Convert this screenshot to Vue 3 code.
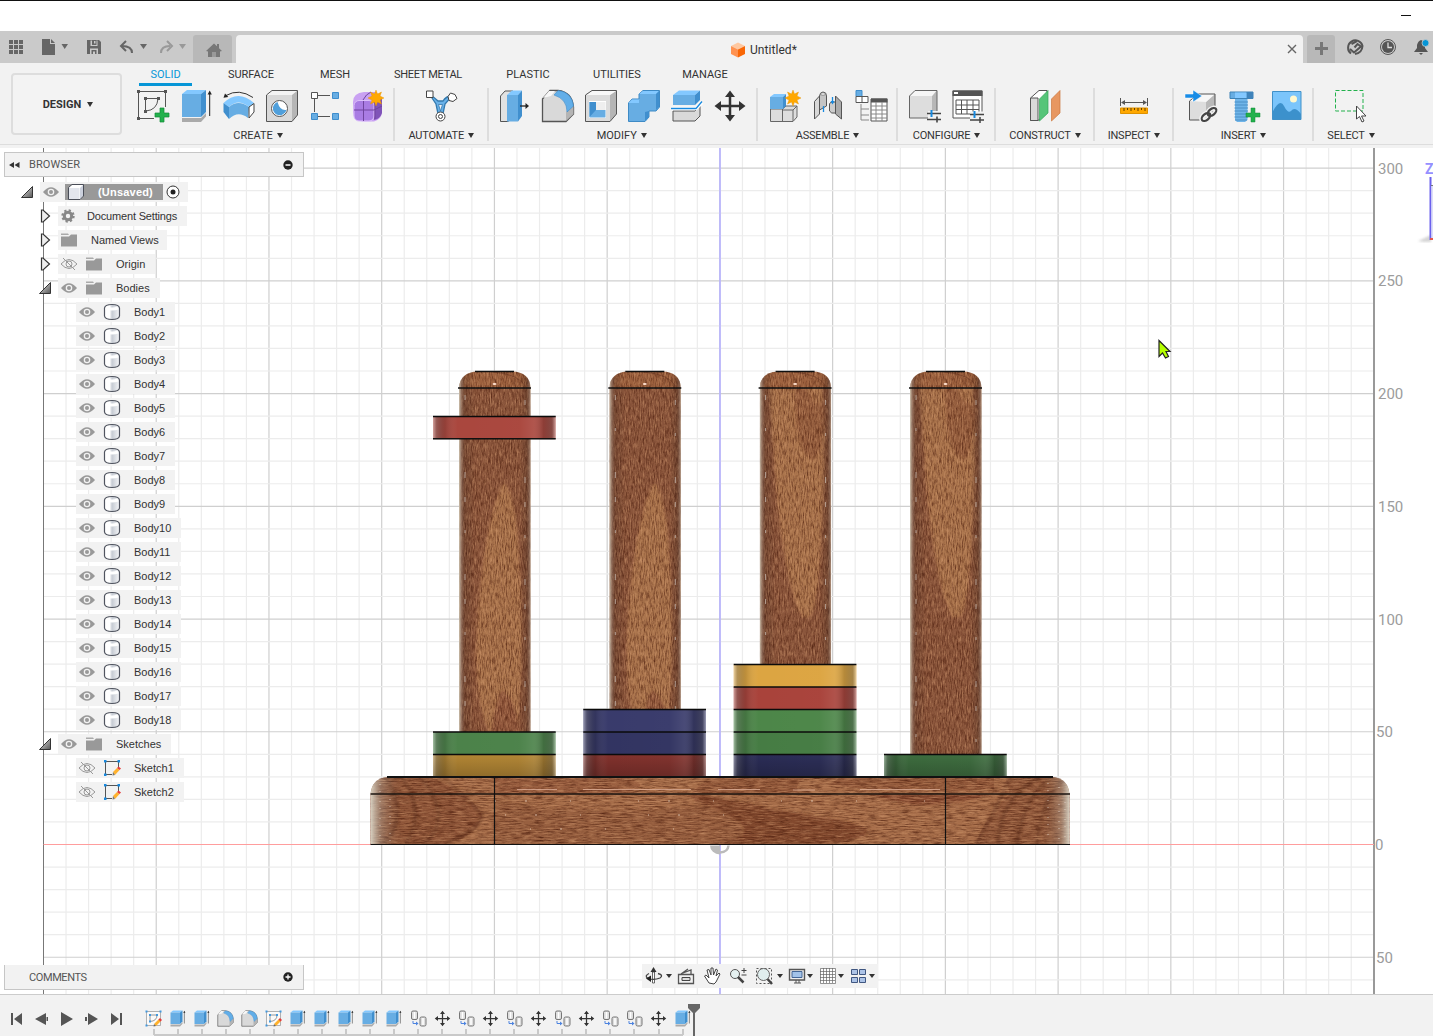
<script setup>
const tabs = ['SOLID', 'SURFACE', 'MESH', 'SHEET METAL', 'PLASTIC', 'UTILITIES', 'MANAGE']

const groups = [
  { name: 'CREATE', cls: 'g-create', icons: ['sketch', 'extrude', 'revolve', 'hole', 'pattern', 'form'] },
  { name: 'AUTOMATE', cls: 'g-automate', icons: ['automate'] },
  { name: 'MODIFY', cls: 'g-modify', icons: ['presspull', 'fillet', 'shell', 'combine', 'split', 'move'] },
  { name: 'ASSEMBLE', cls: 'g-assemble', icons: ['component', 'joint', 'table'] },
  { name: 'CONFIGURE', cls: 'g-configure', icons: ['config', 'configtable'] },
  { name: 'CONSTRUCT', cls: 'g-construct', icons: ['plane'] },
  { name: 'INSPECT', cls: 'g-inspect', icons: ['measure'] },
  { name: 'INSERT', cls: 'g-insert', icons: ['derive', 'bolt', 'image'] },
  { name: 'SELECT', cls: 'g-select', icons: ['select'] },
]

const tree = [
  { label: '(Unsaved)', kind: 'root', open: true, eye: 'eye' },
  { label: 'Document Settings', kind: 'settings', open: false, icon: 'gear' },
  { label: 'Named Views', kind: 'views', open: false, icon: 'folder' },
  { label: 'Origin', kind: 'folder-row', open: false, eye: 'eyeoff', icon: 'folder' },
  { label: 'Bodies', kind: 'folder-row', open: true, eye: 'eye', icon: 'folder' },
  ...Array.from({ length: 18 }, (_, i) => ({ label: `Body${i + 1}`, kind: 'leaf', eye: 'eye', icon: 'body' })),
  { label: 'Sketches', kind: 'folder-row', open: true, eye: 'eye', icon: 'folder' },
  { label: 'Sketch1', kind: 'leaf', eye: 'eyeoff', icon: 'sketchitem' },
  { label: 'Sketch2', kind: 'leaf', eye: 'eyeoff', icon: 'sketchitem' },
]

const history = [
  'tsketch', 'extrude', 'extrude', 'fillet', 'fillet', 'tsketch',
  'extrude', 'extrude', 'extrude', 'extrude', 'extrude',
  'copy', 'move', 'copy', 'move', 'copy', 'move', 'copy', 'move', 'copy', 'copy', 'move', 'extrude',
]

const STEP = 22.547
const columns = Array.from({ length: 60 }, (_, i) => i - 30)
  .map(n => ({ n, x: 719.9 + n * STEP, major: n % 5 === 0 }))
  .filter(c => c.x > 50 && c.x < 1370)
const rows = Array.from({ length: 38 }, (_, i) => i - 6)
  .map(n => ({ n, y: 844.5 - n * STEP, major: n % 5 === 0 }))
  .filter(r => r.y > 148 && r.y < 994)
const scale = [300, 250, 200, 150, 100, 50, 0].map(v => ({ v, y: 844.5 - (v / 10) * STEP }))
scale.push({ v: 50, y: 957.2 })

const pegs = [
  { x: 459, bottom: 732, lobe: 'up' },
  { x: 609.3, bottom: 710, lobe: 'up' },
  { x: 759.6, bottom: 665, lobe: 'down' },
  { x: 910, bottom: 755, lobe: 'down' },
]
const rings = [
  { x: 433, y: 416.5, c: '#a9453c' },
  { x: 433, y: 732, c: '#4a8148' }, { x: 433, y: 754.5, c: '#b28532' },
  { x: 583.3, y: 709.5, c: '#37396a' }, { x: 583.3, y: 732, c: '#303260' }, { x: 583.3, y: 754.5, c: '#81302b' },
  { x: 733.7, y: 664.5, c: '#dca440' }, { x: 733.7, y: 687, c: '#a84139' }, { x: 733.7, y: 709.5, c: '#4b8547' },
  { x: 733.7, y: 732, c: '#447b42' }, { x: 733.7, y: 754.5, c: '#292b55' },
  { x: 884, y: 754.5, c: '#3c6c3d' },
]
</script>

<template>
  <div class="app">
    <svg class="defs" width="0" height="0" aria-hidden="true">
      <defs>
        <linearGradient id="side" x1="0" x2="1"><stop offset="0" stop-color="#d8d8d8" /><stop offset="1" stop-color="#a5a5a5" /></linearGradient>
        <linearGradient id="cyl" x1="0" x2="1"><stop offset="0" stop-color="#fff" /><stop offset=".35" stop-color="#fff" /><stop offset=".5" stop-color="#c6cbd3" /><stop offset="1" stop-color="#f6f7f9" /></linearGradient>
        <linearGradient id="tri" x1="0" y1="0" x2="1" y2="1"><stop offset="0" stop-color="#eee" /><stop offset="1" stop-color="#555" /></linearGradient>
      </defs>

      <symbol id="i-sketch" viewBox="0 0 34 34">
        <path d="M2.500 2.500H29.500V18M2.500 2.500V29.500H18" fill="none" stroke="#555" /><path d="M9.500 22V9.500H22M22 10Q21 21 10 22" fill="none" stroke="#555" />
        <path d="M1 1h3v3H1zM28 1h3v3h-3zM1 28h3v3H1zM8 8h3v3H8zM21 8h3v3h-3zM8 21h3v3H8z" fill="#555" />
        <path d="M24 19h4v5h5v4h-5v5h-4v-5h-5v-4h5z" fill="#22b14c" stroke="#138a36" stroke-width=".7" />
      </symbol>
      <symbol id="i-extrude" viewBox="0 0 34 34">
        <path d="M3 29H22L27 24V27.500L22 33H3z" fill="#aaa" />
        <path d="M3 5L8 1H27L22 5z" fill="#83c8ff" /><path d="M3 5H22V28H3z" fill="#67ade3" /><path d="M22 5L27 1V23L22 28z" fill="#408fce" />
        <path d="M30.700 4V27" stroke="#222" /><path d="M28.600 5.500L30.700 1.500L32.800 5.500z" fill="#222" />
      </symbol>
      <symbol id="i-revolve" viewBox="0 0 34 34">
        <path d="M31 8.500Q17-1 4 6.500" fill="none" stroke="#333" /><path d="M1.500 8.800L3 4.500L6.300 8z" fill="#222" />
        <path d="M1.500 14Q16 0 32 14L27 18Q16 9 7 18z" fill="#83c8ff" />
        <path d="M1.500 14L7 18V30L1.500 23z" fill="#408fce" /><path d="M7 18Q16 10 27 18L26 29Q16 21 7 30z" fill="#67ade3" />
        <path d="M27 18L32 14.500V23L27 29z" fill="#fff" stroke="#444" />
      </symbol>
      <symbol id="i-hole" viewBox="0 0 34 34">
        <path d="M1.500 6L7 1.500H32.500L27 6z" fill="#f4f4f4" /><path d="M27 6L32.500 1.500V26L27 32.500z" fill="#b6b6b6" /><path d="M1.500 6H27V32.500H1.500z" fill="#d9d9d9" />
        <path d="M1.500 6L7 1.500H32.500V26L27 32.500H1.500z" fill="none" stroke="#555" />
        <circle cx="14.500" cy="19.500" r="8" fill="#fff" stroke="#555" /><path d="M12.500 13A6.800 6.800 0 1 0 21.300 21Q15 22 12.500 13z" fill="#4f9fdb" />
      </symbol>
      <symbol id="i-pattern" viewBox="0 0 34 34">
        <path d="M10 6.500H22M6.500 10V23M10 27.500H22" stroke="#555" /><path d="M3.500 3.500h6v6h-6z" fill="#fff" stroke="#555" />
        <path d="M24.500 3.500h6v6h-6zM3.500 24.500h6v6h-6zM24.500 24.500h6v6h-6z" fill="#67ade3" stroke="#3e8dcc" />
      </symbol>
      <symbol id="i-star" viewBox="0 0 16 16">
        <path d="M8 0L9.500 4L13.500 2L12 6L16 8L12 10L13.500 14L9.500 12L8 16L6.500 12L2.500 14L4 10L0 8L4 6L2.500 2L6.500 4z" fill="#ffa800" stroke="#e59200" stroke-width=".4" />
      </symbol>
      <symbol id="i-form" viewBox="0 0 34 34">
        <path d="M2 13Q2 4 13 3H24Q32 6 31 16V23Q31 30 23 32.500H12Q2 32 2 23z" fill="#c9a1f2" />
        <path d="M21 12L31 8V24Q29 30 23 31z" fill="#8054b8" /><rect x="3" y="11.500" width="20" height="20.500" rx="5" fill="#a97ce3" stroke="#dcc0fb" />
        <path d="M12.500 12V32M3 21H23M23 21L31 17M12 11Q15 5 20 3M24 12V30" fill="none" stroke="#70459f" /><use href="#i-star" x="17" y="1" width="16" height="16" />
      </symbol>
      <symbol id="i-automate" viewBox="0 0 34 34">
        <path d="M6 6Q10 8 14 12H19Q22 7 28 7L21 15L18.500 27H14.500L12 15z" fill="#69b1e8" stroke="#3379ae" stroke-width="1.300" /><path d="M14.500 15.500H18.500L16.500 22z" fill="#f2f2f2" stroke="#3379ae" stroke-width=".8" />
        <path d="M2.500 2h6.500v6.500H2.500z" fill="#fff" stroke="#444" /><path d="M26.500 4L31 5.500L33 9.500L29 12.500L25 11.500L24 7.500z" fill="#fff" stroke="#444" />
        <circle cx="16.500" cy="27.500" r="4.500" fill="#fff" stroke="#444" /><circle cx="16.500" cy="27.500" r="2" fill="none" stroke="#444" />
      </symbol>
      <symbol id="i-presspull" viewBox="0 0 34 34">
        <path d="M2.500 7L7 2H15V28L10 32.500H2.500z" fill="#e2e2e2" stroke="#555" /><path d="M9 6L14 1.500H24L20 6z" fill="#83c8ff" /><path d="M9 6h11v26.500H9z" fill="#67ade3" /><path d="M20 6L24 1.500V27L20 32.500z" fill="#408fce" />
        <path d="M22 17H29" stroke="#222" stroke-width="1.300" /><path d="M27.500 14L31 17L27.500 20z" fill="#222" />
      </symbol>
      <symbol id="i-fillet" viewBox="0 0 34 34">
        <path d="M1.500 10L9 1.500H17Q31 3 32.500 18V25L25 32.500H1.500z" fill="#d9d9d9" stroke="#555" stroke-width="1.300" /><path d="M25 23L32.500 17V25L25 32z" fill="#b4b4b4" /><path d="M13 6L17 1.500Q31 3 32.500 17L26 23Q26 10 13 6z" fill="#62aee8" stroke="#3b89c9" stroke-width=".6" /><path d="M2 9L8 2H14L10 7z" fill="#f7f7f7" />
      </symbol>
      <symbol id="i-shell" viewBox="0 0 34 34">
        <path d="M1.500 6L8 1.500H32.500V25L26 32.500H1.500z" fill="#dcdcdc" /><path d="M26 6L32.500 1.500V25L26 32.500z" fill="#b5b5b5" /><path d="M2 6L8 2H32L26 6z" fill="#f8f8f8" /><path d="M1.500 6L8 1.500H32.500V25L26 32.500H1.500z" fill="none" stroke="#555" /><path d="M5 12h17v17H5z" fill="#fff" /><path d="M5.500 13L12 13V21H21.500V28.500H5.500z" fill="#67ade3" /><path d="M12 13H21.500V21H12z" fill="#efefef" /><path d="M5.500 13L12 13V21L5.500 28z" fill="#408fce" />
      </symbol>
      <symbol id="i-combine" viewBox="0 0 34 34">
        <path d="M1.500 14L5 10H12V5L16 1.500H32.500V18L29 22H22V28L18 32.500H1.500z" fill="#67ade3" stroke="#3e8ac5" /><path d="M1.500 14L5 10.500H12V14zM12 5L16 2H32L29 5z" fill="#83c8ff" /><path d="M29 5L32 2V18L29 21zM18 23L22 22V28L18 32z" fill="#408fce" />
      </symbol>
      <symbol id="i-split" viewBox="0 0 34 34">
        <path d="M3 6L9 1.500H30L25 6z" fill="#83c8ff" /><path d="M3 6H25V16H3z" fill="#67ade3" /><path d="M25 6L30 1.500V11L25 16z" fill="#408fce" /><path d="M3 22H25L30 17V27L25 32H3z" fill="#d9d9d9" stroke="#555" /><path d="M1 19.500H26L32 13.500" fill="none" stroke="#fff" stroke-width="3.500" /><path d="M1 19.500H26L32 12.500" fill="none" stroke="#1789df" stroke-width="1.300" />
      </symbol>
      <symbol id="i-move" viewBox="0 0 34 34">
        <path d="M17 5V29M5 17H29" stroke="#333" stroke-width="2.500" /><path d="M17 1.500L22 8H12zM17 32.500L22 26H12zM1.500 17L8 12V22zM32.500 17L26 12V22z" fill="#333" />
      </symbol>
      <symbol id="i-component" viewBox="0 0 34 34">
        <path d="M2.500 20H14.500L18 17H29V28L25 32.500H2.500z" fill="#ddd" stroke="#666" /><path d="M14.500 20V32M14.500 21H25V32M25 21L29 17" fill="none" stroke="#666" /><path d="M2 8L6 5H18L15 8z" fill="#83c8ff" /><path d="M2 8H15V20H2z" fill="#67ade3" /><path d="M15 8L18 5V17L15 20z" fill="#408fce" /><use href="#i-star" x="17" y="1" width="16" height="16" />
      </symbol>
      <symbol id="i-joint" viewBox="0 0 34 34">
        <path d="M3.500 12.500L8.500 7V25L3.500 30z" fill="#d8d8d8" stroke="#555" /><path d="M8.500 7Q9 3 12 3Q15.500 3 15.500 7V17L12 19L8.500 21z" fill="#c4c4c4" stroke="#555" /><ellipse cx="12" cy="5" rx="2.500" ry="1.200" fill="#fff" stroke="#666" stroke-width=".7" />
        <path d="M24.500 7L30.500 13V30L24.500 25z" fill="#ababab" stroke="#555" /><path d="M18.500 15Q19 13 21.500 13H24.500V24Q20 25 18.500 22z" fill="#ccc" stroke="#555" /><path d="M12.500 17V23M21.500 8V14" stroke="#1789df" stroke-width="1.300" /><path d="M19.500 12H23.500L21.500 15.500z" fill="#1789df" />
      </symbol>
      <symbol id="i-table" viewBox="0 0 34 34">
        <path d="M2 1.500h6v6H2z" fill="#67ade3" stroke="#3e8dcc" /><path d="M2 7.500h12v6H2zM8 7.500v6" fill="#fff" stroke="#555" /><path d="M7 15V31H15M7 20H15M7 26H15" fill="none" stroke="#888" /><path d="M17 10h16v22H17z" fill="#fff" stroke="#555" /><path d="M17 9.500h16.500v4H17z" fill="#555" /><path d="M17 17h16M17 21h16M17 25h16M17 29h16M22 13v19M28 13v19" stroke="#888" />
      </symbol>
      <symbol id="i-config" viewBox="0 0 34 34">
        <path d="M1.500 7L7 1.500H29V23L24 29H1.500z" fill="#ddd" /><path d="M24 7L29 1.500V23L24 29z" fill="#b7b7b7" /><path d="M2 7L7 2H28L24 7z" fill="#f6f6f6" /><path d="M1.500 7L7 1.500H29V23L24 29H1.500z" fill="none" stroke="#666" /><path d="M20 22H34V34H20z" fill="#f2f2f2" /><path d="M19 24.500H33M19 30.500H33M29 27.500V33.500" stroke="#444" stroke-width="1.600" /><path d="M23.500 21V28" stroke="#1789df" stroke-width="2" />
      </symbol>
      <symbol id="i-configtable" viewBox="0 0 34 34">
        <path d="M2 2H31V29H2z" fill="#fff" stroke="#555" /><path d="M1.500 1.500H31.500V7H1.500z" fill="#555" /><path d="M3 3h4v2H3z" fill="#fff" /><path d="M5 11h23v14H5zM5 16h23M5 20.500h23M10.500 11v14M16 11v14M22 11v14" fill="none" stroke="#555" /><path d="M19 22.500H34V34H19z" fill="#f2f2f2" /><path d="M19 25.500H33M19 31H33M29 28V34" stroke="#444" stroke-width="1.500" /><path d="M23.500 22V29" stroke="#1789df" stroke-width="2" />
      </symbol>
      <symbol id="i-plane" viewBox="0 0 34 34">
        <path d="M2.500 9L11 1.500H19V24L10 31.500H2.500z" fill="#fff" stroke="#555" /><path d="M2.500 9H10V31.500H2.500z" fill="#d9d9d9" stroke="#555" /><path d="M11.500 10L20 1.500V24L11.500 32z" fill="#56c579" stroke="#35a65a" stroke-width=".7" /><path d="M23.500 10L32 1.500V24L23.500 32z" fill="#e79761" stroke="#cb773d" stroke-width=".7" />
      </symbol>
      <symbol id="i-measure" viewBox="0 0 34 34">
        <path d="M3.500 9V17M30.500 9V17M5 13.500H29" stroke="#555" /><path d="M4 13.500L8 11V16zM30 13.500L26 11V16z" fill="#555" /><path d="M3.500 19H30.500V24.500H3.500z" fill="#ffa800" stroke="#df9200" /><path d="M7 19V22M10.500 19V21M14 19V22M17.500 19V21M21 19V22M24.500 19V21M28 19V22" stroke="#654000" />
      </symbol>
      <symbol id="i-derive" viewBox="0 0 34 34">
        <path d="M5.500 12L14 5H31V23L22 31H5.500z" fill="#ddd" /><path d="M22 13L31 5V23L22 31z" fill="#b9b9b9" /><path d="M5.500 12L14 5H31L22 13z" fill="#f7f7f7" /><path d="M5.500 12L14 5H31V23L22 31H5.500z" fill="none" stroke="#555" /><path d="M1 5h8V1L18 7L9 13V9H1z" fill="#188ce6" stroke="#fff" stroke-width=".5" /><g fill="none" stroke="#f2f2f2" stroke-width="5"><ellipse cx="22" cy="28" rx="5" ry="3" transform="rotate(-40 22 28)" /><ellipse cx="28" cy="23" rx="5" ry="3" transform="rotate(-40 28 23)" /></g><g fill="none" stroke="#444" stroke-width="2.200"><ellipse cx="22" cy="28" rx="5" ry="3" transform="rotate(-40 22 28)" /><ellipse cx="28" cy="23" rx="5" ry="3" transform="rotate(-40 28 23)" /></g>
      </symbol>
      <symbol id="i-bolt" viewBox="0 0 34 34">
        <path d="M3 3h23v6.500H3z" fill="#67ade3" stroke="#3e83b7" /><path d="M8 3.500H19V9H8z" fill="#83c8ff" /><path d="M20 3h6v6.500h-6z" fill="#3f83bb" /><path d="M8 10H20.500V31L18 33H10L8 31z" fill="#70b5e9" /><path d="M7.500 13H21M7.500 16H21M7.500 19H21M7.500 22H21M7.500 25H21M7.500 28H21M8 31H20" stroke="#4a8fc6" stroke-width="1" /><path d="M24 19h4v5h5v4h-5v5h-4v-5h-5v-4h5z" fill="#22b14c" stroke="#138a36" stroke-width=".5" />
      </symbol>
      <symbol id="i-image" viewBox="0 0 34 34">
        <path d="M2.500 2.500H31V30.500H2.500z" fill="#7bc5fb" /><path d="M2.500 23Q10 9 14 17Q18 25 21 22Q25 17 31 25V30.500H2.500z" fill="#3c91cc" /><path d="M2.500 2.500H31V30.500H2.500z" fill="none" stroke="#4191c8" /><circle cx="23.500" cy="10" r="3.500" fill="#fff8cf" />
      </symbol>
      <symbol id="i-select" viewBox="0 0 34 34">
        <path d="M2.500 1.500H30V22H2.500z" fill="none" stroke="#22b14c" stroke-dasharray="4 2" /><path d="M23.500 17V30L26.500 27.500L29 33L31 32L28.500 27H33z" fill="#fff" stroke="#444" />
      </symbol>

      <symbol id="i-eye" viewBox="0 0 18 18"><path d="M1 9Q9-.5 17 9Q9 18.500 1 9z" fill="#999" /><circle cx="9" cy="9" r="3.300" fill="#f2f2f2" /><circle cx="9" cy="9" r="2" fill="#999" /></symbol>
      <symbol id="i-eyeoff" viewBox="0 0 18 18"><path d="M1 9Q9 0 17 9Q9 18 1 9zM3 3L15 15" fill="none" stroke="#999" /><circle cx="9" cy="9" r="3" fill="none" stroke="#999" /></symbol>
      <symbol id="i-gear" viewBox="0 0 18 18"><circle cx="9" cy="9" r="3.700" fill="none" stroke="#888" stroke-width="3" /><circle cx="9" cy="9" r="5.600" fill="none" stroke="#888" stroke-width="2.200" stroke-dasharray="2.200 2.198" /></symbol>
      <symbol id="i-folder" viewBox="0 0 18 18"><path d="M1 5.500H9L11 3.500H17V15.500H1z" fill="#999" /><path d="M1 2.500H8L9 4H1z" fill="#aaa" /></symbol>
      <symbol id="i-body" viewBox="0 0 18 18"><path d="M1.500 5Q2 1.500 9 1.500T16.500 5V13Q16 16.500 9 16.500T1.500 13z" fill="url(#cyl)" stroke="#50545f" stroke-width="1.200" /><path d="M3 5Q9 7 15 5" fill="none" stroke="#fff" stroke-width="3" /></symbol>
      <symbol id="i-cube" viewBox="0 0 18 18"><path d="M1.500 4.500L5 1.500H16.500V13L13 16.500H1.500z" fill="#fff" /><path d="M2 5H12.500V16H2z" fill="#e3e6ed" /><path d="M13 5L16 2V13L13 16z" fill="#cbd0dc" /><path d="M1.500 4.500L5 1.500H16.500V13L13 16.500H1.500z" fill="none" stroke="#4a4e58" /></symbol>
      <symbol id="i-sketchitem" viewBox="0 0 18 18"><path d="M2.500 2.500H15.500V8M2.500 2.500V15.500H9" fill="none" stroke="#555" /><path d="M1 1h2.500v2.500H1zM14.500 1H17v2.500h-2.500zM1 14.500h2.500V17H1z" fill="#1789df" /><path d="M10 13L14 9L16.500 11L12 16z" fill="#ffb22e" /><path d="M14 9L15.500 7.500L18 9.500L16.500 11z" fill="#e43b3b" /><path d="M9.500 16.500L10 13L12 16z" fill="#777" /></symbol>
      <symbol id="i-tsketch" viewBox="0 0 34 34"><path d="M3 3H31V31H3z" fill="#fafafa" stroke="#999" stroke-width="1.500" /><path d="M10 10H24Q24 22 10 23z" fill="none" stroke="#777" stroke-width="1.500" /><path d="M1 1h4v4H1zM29 1h4v4h-4zM1 29h4v4H1zM8 8h4v4H8zM22 8h4v4h-4zM8 21h4v4H8z" fill="#4298dd" /><path d="M18 28L28 18L32 22L22 32z" fill="#ffb22e" /><path d="M27 19L30 16L34 20L31 23z" fill="#e43b3b" /><path d="M17 33L18 28L22 32z" fill="#666" /></symbol>
      <symbol id="i-copy" viewBox="0 0 34 34"><rect x="3" y="2" width="12" height="17" rx="3" fill="#ddd" stroke="#777" stroke-width="2" /><rect x="20" y="14" width="12" height="18" rx="3" fill="#ddd" stroke="#777" stroke-width="2" /><path d="M9 4V17M26 16V30" stroke="#fff" stroke-width="3" /><path d="M6 22V27H13" fill="none" stroke="#4c83df" stroke-width="2" /><path d="M12 23L17 27L12 31z" fill="#4c83df" /></symbol>
    </svg>

    <header class="titlebar"><span class="minimize"></span></header>

    <div class="docbar">
      <div class="quick">
        <svg width="236" height="32" viewBox="0 31 236 32">
          <path d="M9 40h4v4H9zM14 40h4v4h-4zM19 40h4v4h-4zM9 45h4v4H9zM14 45h4v4h-4zM19 45h4v4h-4zM9 50h4v4H9zM14 50h4v4h-4zM19 50h4v4h-4z" fill="#666" />
          <path d="M42 39H50V44H55V55H42zM51 39L55 43H51zM61.500 44H68L64.700 49z" fill="#666" />
          <path d="M87 40H99L101 42V54H87z" fill="#666" /><path d="M90.500 40.500H97.500V46H90.500zM90 48.500H98V54H90z" fill="#cacaca" /><path d="M92 40h4.500v5H92zM91.500 50H96.500V54H91.500z" fill="#666" /><path d="M94 41h1.500v2.500H94zM93 51.500H95V54H93z" fill="#cacaca" />
          <path d="M132 53Q132 46 122 46" fill="none" stroke="#666" stroke-width="2" /><path d="M126 41L121 46L126 51" fill="none" stroke="#666" stroke-width="2" /><path d="M140 44h7l-3.500 5z" fill="#666" />
          <path d="M161 53Q161 46 170 46" fill="none" stroke="#999" stroke-width="2" /><path d="M167 41L172 46L167 51" fill="none" stroke="#999" stroke-width="2" /><path d="M179 44h7l-3.500 5z" fill="#999" />
          <path d="M193 63V38Q193 35 196 35H229Q232 35 232 38V63z" fill="#b8b8b8" /><path d="M206 51L214 43.500L222 51L220 51.500V57H208V51.500z" fill="#777" /><path d="M217 44h2v4h-2z" fill="#777" /><path d="M212 52h4v5h-4z" fill="#999" />
        </svg>
      </div>
      <div class="doctab">
        <svg width="16" height="16" viewBox="0 0 16 16"><path d="M8 .5L15 4L8 7.500L1 4z" fill="#ffc8a0" /><path d="M1 4L8 7.500V15.500L1 12z" fill="#ff9250" /><path d="M15 4L8 7.500V15.500L15 12z" fill="#f96706" /></svg>
        <span>Untitled*</span>
        <svg class="close" width="10" height="10"><path d="M1 1L9 9M9 1L1 9" stroke="#666" stroke-width="1.400" /></svg>
      </div>
      <svg class="account" width="126" height="32" viewBox="1307 31 126 32">
        <path d="M1307 63V38Q1307 35 1310 35H1332Q1335 35 1335 38V63z" fill="#b8b8b8" /><path d="M1315 48.500H1328M1321.500 42V55" stroke="#777" stroke-width="3" />
        <path d="M1351 53.500A7.300 7.300 0 1 1 1362.500 46Q1362 53 1355 54" fill="none" stroke="#555" stroke-width="2" /><path d="M1350 49L1354 52.500L1361 46.500L1357.500 44L1354.500 47.500M1351.500 44L1357 41" fill="none" stroke="#555" stroke-width="2" />
        <circle cx="1388" cy="47" r="7.500" fill="none" stroke="#555" /><circle cx="1388" cy="47" r="6" fill="#555" /><path d="M1388 42.500V47.500H1392" fill="none" stroke="#ddd" stroke-width="1.300" />
        <path d="M1414 52L1417 48V45Q1418 41 1421 40Q1425 41 1425 45V48L1428 52z" fill="#555" /><path d="M1419 53h4l-2 2z" fill="#555" /><circle cx="1425.500" cy="43" r="3.500" fill="#0696d7" stroke="#cacaca" stroke-width=".8" />
      </svg>
    </div>

    <section class="ribbon">
      <nav class="tabs"><span v-for="(t, i) in tabs" :key="t" class="tab" :class="{ active: i === 0 }">{{ t }}</span></nav>
      <div class="tools">
        <div v-for="g in groups" :key="g.name" class="group" :class="g.cls">
          <div class="icons"><svg v-for="n in g.icons" :key="n" width="34" height="34"><use :href="'#i-' + n" /></svg></div>
          <div class="label">{{ g.name }}<i class="caret"></i></div>
        </div>
      </div>
      <button class="workspace">DESIGN<i class="caret"></i></button>
    </section>

    <main class="viewport">
      <svg class="scene" width="1433" height="846" viewBox="0 148 1433 846">
        <defs>
          <filter id="grainV" x="0" y="0" width="1" height="1" color-interpolation-filters="sRGB">
            <feTurbulence type="fractalNoise" baseFrequency=".8 .14" numOctaves="4" seed="7" result="t" />
            <feColorMatrix in="t" values="0 0 0 0 .28  0 0 0 0 .1  0 0 0 0 .04  1.5 0 0 0 -.62" result="n" />
            <feColorMatrix in="t" values="0 0 0 0 .85  0 0 0 0 .63  0 0 0 0 .46  0 1.200 0 0 -.55" result="l" />
            <feComposite in="n" in2="SourceGraphic" operator="in" result="g" /><feComposite in="l" in2="SourceGraphic" operator="in" result="h" />
            <feMerge><feMergeNode in="SourceGraphic" /><feMergeNode in="g" /><feMergeNode in="h" /></feMerge>
          </filter>
          <filter id="grainH" x="0" y="0" width="1" height="1" color-interpolation-filters="sRGB">
            <feTurbulence type="fractalNoise" baseFrequency=".09 .75" numOctaves="4" seed="4" result="t" />
            <feColorMatrix in="t" values="0 0 0 0 .28  0 0 0 0 .1  0 0 0 0 .04  1.500 0 0 0 -.62" result="n" />
            <feColorMatrix in="t" values="0 0 0 0 .85  0 0 0 0 .63  0 0 0 0 .46  0 1.200 0 0 -.55" result="l" />
            <feComposite in="n" in2="SourceGraphic" operator="in" result="g" /><feComposite in="l" in2="SourceGraphic" operator="in" result="h" />
            <feMerge><feMergeNode in="SourceGraphic" /><feMergeNode in="g" /><feMergeNode in="h" /></feMerge>
          </filter>
          <filter id="soft" x="-20%" width="140%"><feGaussianBlur stdDeviation="1.200" /></filter>
          <linearGradient id="round" x1="0" x2="1">
            <stop offset="0" stop-color="#d8d2bf" stop-opacity=".9" /><stop offset=".035" stop-color="#998071" stop-opacity=".6" /><stop offset=".08" stop-color="#40271d" stop-opacity=".25" /><stop offset=".22" stop-color="#40271d" stop-opacity="0" />
            <stop offset=".84" stop-color="#40271d" stop-opacity="0" /><stop offset=".94" stop-color="#40271d" stop-opacity=".3" /><stop offset=".98" stop-color="#998071" stop-opacity=".6" /><stop offset="1" stop-color="#d8d2bf" stop-opacity=".9" />
          </linearGradient>
          <linearGradient id="shine" x1="0" x2="1">
            <stop offset="0" stop-color="#fff" stop-opacity=".5" /><stop offset=".03" stop-color="#777" stop-opacity=".4" /><stop offset=".1" stop-color="#222" stop-opacity=".16" /><stop offset=".2" stop-color="#fff" stop-opacity=".01" />
            <stop offset=".7" stop-color="#fff" stop-opacity=".02" /><stop offset=".82" stop-color="#fff" stop-opacity=".09" /><stop offset=".9" stop-color="#222" stop-opacity=".2" /><stop offset=".97" stop-color="#555" stop-opacity=".4" /><stop offset="1" stop-color="#fff" stop-opacity=".5" />
          </linearGradient>
          <linearGradient id="shade" x1="0" x2="0" y1="0" y2="1"><stop offset="0" stop-color="#000" stop-opacity="0" /><stop offset="1" stop-color="#000" stop-opacity=".2" /></linearGradient>
          <linearGradient id="ends" x1="0" x2="1"><stop offset="0" stop-color="#ddd8c9" stop-opacity=".95" /><stop offset=".015" stop-color="#b7aea2" stop-opacity=".4" /><stop offset=".045" stop-color="#835a42" stop-opacity="0" /><stop offset=".96" stop-color="#835a42" stop-opacity="0" /><stop offset=".988" stop-color="#b7aea2" stop-opacity=".4" /><stop offset="1" stop-color="#ddd8c9" stop-opacity=".95" /></linearGradient>
          <clipPath id="baseclip"><path d="M370.500 844V796Q371 778 388 777H1052Q1069 778 1069.500 796V844z" /></clipPath>
          <clipPath id="pegclip"><path d="M0 800V388Q1 372 19 371.500H53Q71 372 71.500 388V800z" /></clipPath>
        </defs>

        <g fill="none">
          <path v-for="c in columns" :key="'c' + c.n" :d="`M${c.x} 148V994`" :stroke="c.major ? '#cfcfcf' : '#ececec'" stroke-width="1.200" />
          <path v-for="r in rows" :key="'r' + r.n" :d="`M43.500 ${r.y}H1374`" :stroke="r.major ? '#cfcfcf' : '#ececec'" stroke-width="1.200" />
          <path d="M43.500 148V994" stroke="#777" /><path d="M1374 148V994" stroke="#999" stroke-width="2" />
          <path d="M43.500 844.500H1374" stroke="#ff9d9d" /><path d="M720 148V994" stroke="#b6b2ff" stroke-width="1.600" />
        </g>
        <g class="axis"><text v-for="(s, i) in scale" :key="i" :x="s.v ? (s.v === 50 ? 1376 : 1378) : 1375" :y="s.y + 5.500">{{ s.v }}</text></g>

        <g v-for="p in pegs" :key="p.x">
          <svg :x="p.x" y="371" width="72" :height="p.bottom - 371" :viewBox="`0 371 72 ${p.bottom - 371}`">
            <g clip-path="url(#pegclip)">
              <g filter="url(#grainV)">
                <rect y="371" width="72" height="420" fill="#8b563c" />
                <path v-if="p.lobe === 'up'" d="M45 483C30 500 17 590 17 660Q18 710 30 732H58Q67 660 60 550Q56 490 45 483z" fill="#ab744e" filter="url(#soft)" />
                <path v-if="p.lobe === 'up'" d="M43 690Q34 706 33 735H61Q58 700 43 690z" fill="#91593c" filter="url(#soft)" />
                <path v-else d="M9 388Q13 440 17 500Q27 590 42 617Q50 621 54 610Q61 580 62 535Q68 450 63 388z" fill="#ab744e" filter="url(#soft)" />
                <path v-if="p.lobe === 'down'" d="M35 388Q35 455 55 460Q66 440 66 400Q55 410 48 388z" fill="#834c32" opacity=".5" filter="url(#soft)" />
                <path d="M4 371H68V388H4z" fill="#b06b40" opacity=".5" />
              </g>
              <rect y="371" width="72" height="420" fill="url(#round)" />
              <path d="M6 395V790M66 400V790" stroke="#e2ded8" stroke-width=".9" stroke-dasharray="5 28 3 41 6 19" opacity=".65" />
              <ellipse cx="35.500" cy="384" rx="2" ry="1" fill="#ffe1d0" />
              <path d="M34 372Q60 374 67 387" stroke="#643421" fill="none" opacity=".5" />
            </g>
          </svg>
          <path :d="`M${p.x + 16} 371.500h39M${p.x - 1} 388h73`" stroke="#111" stroke-width="1.500" />
        </g>

        <g v-for="(r, i) in rings" :key="'k' + i">
          <rect :x="r.x" :y="r.y" width="122.700" height="22.600" :fill="r.c" />
          <rect :x="r.x" :y="r.y" width="122.700" height="22.600" fill="url(#shine)" />
          <rect v-if="r.y > 750" :x="r.x" :y="r.y" width="122.700" height="22.600" fill="url(#shade)" />
          <path :d="`M${r.x} ${r.y}h122.700`" stroke="#0b0b0b" stroke-width="1.300" />
        </g>
        <path d="M433 438.800h122.700" stroke="#111" stroke-width="1.400" />

        <g clip-path="url(#baseclip)">
          <g filter="url(#grainH)">
            <rect x="370" y="776" width="700" height="69" fill="#a76e4a" />
            <path d="M494 776H620Q660 785 620 794H494z" fill="#9a5f40" />
            <path d="M494 800Q600 820 720 802Q770 806 800 816Q862 822 868 832Q855 844 800 844H494z" fill="#98603f" filter="url(#soft)" />
            <path d="M690 794Q740 800 770 810Q860 820 868 832Q855 844 800 844H720Q780 830 694 800z" fill="#82492f" filter="url(#soft)" />
            <path d="M720 777H805Q792 787 800 794H690Q700 783 720 777zM840 777H994V788Q930 796 830 785z" fill="#8b5035" opacity=".6" />
            <path d="M870 794Q910 809 946 803Q975 801 990 794z" fill="#8b5035" filter="url(#soft)" />
            <path d="M370 777H430Q480 800 482 817Q475 838 445 844H370z" fill="#8f5639" />
            <path d="M1070 777H1005L1010 794Q985 815 976 844H1070z" fill="#935b3d" />
            <g fill="none" stroke="#663722" stroke-width="4" opacity=".5" filter="url(#soft)"><path d="M385 777Q410 815 384 844M402 777Q427 814 405 844M420 777Q455 817 424 844M443 777Q481 810 482 817Q479 830 445 844" /><path d="M1055 777Q1025 790 1017 844M1040 777Q1000 798 998 844M1064 780Q1040 800 1037 844M1010 777Q1002 798 976 844" /></g>
          </g>
          <rect x="370.500" y="777" width="699" height="67" fill="url(#ends)" />
          <path d="M517 789.500H557M583 789.500H691M718 789.500H760M793 790H815M860 789.500H940" stroke="#e6b8a2" opacity=".7" />
          <path d="M380 784V842M390 799V842M1059 787V842M1048 783V838M1065 802V842" stroke="#eee3db" stroke-dasharray="1 6 1 9" opacity=".65" />
          <path d="M495 801H940M505 815H760M530 829H700" stroke="#fff0e0" stroke-dasharray="1 29 2 43 1 67" opacity=".65" />
        </g>
        <path d="M387 777H1053" stroke="#111" stroke-width="1.800" /><path d="M370.500 794H1070" stroke="#1b1410" stroke-width="1.600" /><path d="M370.500 844.500H1070M494.500 777V844M945.500 777V844" stroke="#111" stroke-width="1.200" />
        <path d="M710 845.500A10 9 0 0 0 720 854.500V845.500z" fill="#bbb" /><path d="M720 852.500Q728 852 728.500 845.500" fill="none" stroke="#bbb" stroke-width="2.500" />

        <path d="M1159 340.500V356.500L1162.500 353L1165.500 358L1168.500 356.500L1166 351.500H1170z" fill="#b5ff00" stroke="#222" stroke-width="1.200" />
        <path d="M1418 241L1431 235V242H1424z" fill="#999" opacity=".4" filter="url(#soft)" /><path d="M1430.500 177V240" stroke="#6b60ed" stroke-width="2" /><path d="M1431 185.500H1433" stroke="#777" /><path d="M1431.500 186H1433V239H1431.500z" fill="#dedff7" /><path d="M1430 239h3" stroke="#e5584d" stroke-width="2" />
        <text x="1425" y="174" class="cubeaxis">Z</text>
      </svg>

      <section class="browser">
        <div class="panelhead"><svg width="11" height="8"><path d="M5 1v6L0 4zM10.500 1v6L5.500 4z" fill="#333" /></svg><span>BROWSER</span><svg class="toggle" width="10" height="10"><circle cx="5" cy="5" r="4.700" fill="#222" /><path d="M2.500 5h5" stroke="#fff" stroke-width="1.500" /></svg></div>
        <div v-for="item in tree" :key="item.label" class="row" :class="item.kind">
          <svg class="expander" width="14" height="16"><path v-if="item.open" d="M1.500 13.500L12.500 2.500V13.500z" fill="url(#tri)" stroke="#333" /><path v-else-if="item.open === false" d="M3.500 2V14H5L11.500 8L5 2z" fill="#eee" stroke="#333" stroke-width="1.200" /></svg>
          <div class="strip">
            <svg v-if="item.eye" class="eye" width="18" height="18"><use :href="'#i-' + item.eye" /></svg>
            <div v-if="item.kind === 'root'" class="rootname"><svg width="18" height="18"><use href="#i-cube" /></svg><b>{{ item.label }}</b></div>
            <svg v-if="item.kind === 'root'" class="radio" width="14" height="14"><circle cx="7" cy="7" r="6" fill="#fff" stroke="#333" /><circle cx="7" cy="7" r="2.500" fill="#222" /></svg>
            <svg v-if="item.icon" class="glyph" width="18" height="18"><use :href="'#i-' + item.icon" /></svg>
            <span v-if="item.kind !== 'root'" class="name">{{ item.label }}</span>
          </div>
        </div>
      </section>

      <section class="comments panelhead"><span>COMMENTS</span><svg class="toggle" width="10" height="10"><circle cx="5" cy="5" r="4.700" fill="#222" /><path d="M2.500 5h5M5 2.500v5" stroke="#fff" stroke-width="1.300" /></svg></section>

      <div class="navbar">
        <svg width="236" height="24" viewBox="642 964 236 24" fill="none">
          <path d="M652.500 983V972H654.500V983z" fill="#fff" stroke="#444" stroke-width=".8" /><path d="M649 973.500Q644 976 648 978.500Q654 980.500 660 978Q664 975 658 973.500" stroke="#444" stroke-width="1.300" /><path d="M650.500 972L653.500 967L656.500 972z" fill="#333" /><path d="M651 975.500L646 978.500L651 982z" fill="#222" />
          <path d="M678.500 974.500H693.500V983.500H678.500zM681 974L688 969M683 973L691 970V974" stroke="#555" stroke-width="1.300" /><path d="M682 977.500h8v3h-8z" fill="#ddd" stroke="#444" />
          <path d="M709 983L704.500 976L706 975L709 978L707 970L709 969.500L711 975L711 968L713 968L713.500 975L716 969L717.500 970L716 976L719 973L720 974L716 982L714 984z" fill="#fff" stroke="#444" />
          <circle cx="735" cy="974" r="4.500" fill="#e5f1f1" stroke="#555" /><path d="M738 977L743.500 982.500" stroke="#444" stroke-width="2.500" /><path d="M741.500 970.500h5M744 968v5M741.500 975h5" stroke="#444" />
          <path d="M756.500 968.500h15v15h-15z" stroke="#555" stroke-dasharray="2 2" /><circle cx="763.500" cy="974.500" r="6" fill="#e0eeee" stroke="#666" /><path d="M767.500 979L772 984" stroke="#444" stroke-width="2.500" />
          <path d="M789.500 969.500H804.500V980H789.500z" fill="#eee" stroke="#555" stroke-width="1.400" /><path d="M792 971.500h10v6h-10z" fill="#a3c3e9" stroke="#446695" /><path d="M794 983H801M796 980V983M799 980V983" stroke="#555" />
          <path d="M820.500 968.500h15v15h-15z" fill="#fff" /><path d="M820.500 968.500h15v15h-15zM823.500 968v15M826.500 968v15M829.500 968v15M832.500 968v15M820 971.500h15M820 974.500h15M820 977.500h15M820 980.500h15" stroke="#666" stroke-width=".7" />
          <path d="M851.500 969.500h6v5h-6zM859.500 969.500h6v5h-6zM851.500 977.500h6v5h-6zM859.500 977.500h6v5h-6z" fill="#acc3e7" stroke="#405781" />
          <path d="M666 974h6l-3 4zM777 974h6l-3 4zM807 974h6l-3 4zM838 974h6l-3 4zM869 974h6l-3 4z" fill="#333" />
        </svg>
      </div>
    </main>

    <footer class="timeline">
      <svg class="playback" width="141" height="40" viewBox="0 995 141 40" fill="#555">
        <path d="M11 1013h2v12h-2zM22 1013v12l-8-6zM46 1013v12l-11-6zM46.500 1017h1.500v4h-1.500zM61 1012L73 1019L61 1026zM85 1017h2v4h-2zM88 1013L98 1019L88 1025zM111 1013L119 1019L111 1025zM120 1013h2v12h-2z" />
      </svg>
      <div class="history"><div v-for="(h, i) in history" :key="i" class="feature"><svg width="17" height="17"><use :href="'#i-' + h" /></svg><i></i></div></div>
      <svg class="marker" width="14" height="34" viewBox="0 0 14 34"><path d="M1 2h12v4L8 11V34H6V11L1 6z" fill="#666" /></svg>
    </footer>
  </div>
</template>

<style>
body { margin: 0; overflow: hidden; background: #fff; }
</style>

<style scoped>
.app { width: 1433px; height: 1036px; display: flex; flex-direction: column; overflow: hidden; font-family: Roboto, "Liberation Sans", sans-serif; font-size: 11px; color: #333; background: #fff; }
.app * { box-sizing: border-box; }
svg { display: block; flex: none; }
.defs { position: absolute; }
.titlebar { height: 31px; flex: none; border-top: 1px solid #111; background: #fff; display: flex; justify-content: flex-end; padding: 14px 22px 0 0; }
.minimize { width: 10px; height: 1px; background: #111; }
.docbar { height: 32px; flex: none; background: #cacaca; display: flex; }
.quick { width: 236px; }
.doctab { width: 1067px; height: 28px; margin-top: 4px; background: #f2f2f2; border-radius: 4px 4px 0 0; display: flex; align-items: center; padding-left: 494px; font-size: 12px; padding-top: 2px; }
.doctab span { margin-left: 4px; letter-spacing: .05px; }
.doctab .close { margin-left: auto; margin-right: 6px; margin-top: -2px; }
.account { margin-left: 4px; }
.ribbon { height: 85px; flex: none; background: #f2f2f2; display: grid; grid-template-columns: 122px 1311px; grid-template-rows: 24px 58px 3px; }
.tabs { grid-column: 2; grid-row: 1; padding-left: 16px; display: grid; grid-template-columns: 54px 118px 50px 136px 64px 114px 62px; text-align: center; line-height: 23px; }
.tab:nth-child(4) { letter-spacing: -.3px; }
.tab.active { color: #0696d7; border-bottom: 3px solid #0696d7; margin-left: 1px; height: 23px; }
.tools { grid-column: 2; grid-row: 2; display: flex; }
.ribbon::after { content: ""; grid-column: 1 / 3; grid-row: 3; height: 1px; background: #ddd; margin-top: -1px; }
.group { display: flex; flex-direction: column; align-items: center; padding-top: 2px; height: 54px; border: 0 solid; border-image: linear-gradient(transparent 2px, #ddd 2px) 1; border-width: 0 2px 0 0; }
.icons { display: flex; gap: 9px; padding-left: 1px; }
.label { display: flex; align-items: center; height: 20px; flex: none; margin-top: 1px; padding: 2px 0 0 1px; white-space: nowrap; letter-spacing: -.2px; }
.caret { border: 3px solid transparent; border-top: 5px solid #333; border-bottom: 0; margin-left: 4px; }
.g-create { width: 273px; } .g-create .icons { padding-left: 5px; }
.g-automate { width: 93.500px; } .g-modify { width: 269.500px; } .g-assemble { width: 140px; } .g-modify .label { padding-right: 2px; }
.g-create .label, .g-modify .label { letter-spacing: 0; }
.g-configure { width: 98px; } .g-construct { width: 99px; } .g-inspect { width: 79px; } .g-insert { width: 140px; }
.g-select { width: 73px; border: 0; } .g-select .icons { padding: 0 2px 0 0; }
.workspace { grid-column: 1; grid-row: 1 / 3; width: 111px; height: 62px; margin: 10px 0 0 11px; background: #f3f3f3; border: 2px solid #ddd; border-radius: 4px; font: bold 11px Roboto, sans-serif; color: #333; display: flex; align-items: center; justify-content: center; padding: 0 0 0 3px; }
.workspace .caret { margin-left: 6px; }
.viewport { height: 846px; flex: none; position: relative; }
.axis { font-size: 15px; fill: #9c9c9c; }
.cubeaxis { font-size: 14px; font-weight: bold; fill: #9590ff; }
.browser { position: absolute; left: 4px; top: 4px; width: 300px; }
.panelhead { height: 25px; width: 300px; background: #f2f2f2; border: 1px solid #c6c6c6; display: flex; align-items: center; padding: 0 10.500px 0 4px; color: #555; }
.panelhead span { margin-left: 9px; letter-spacing: .1px; }
.panelhead .toggle { margin-left: auto; }
.comments { position: absolute; left: 4px; top: 817px; border-top: 0; padding-left: 15px; }
.comments.panelhead span { letter-spacing: -.4px; }
.row { height: 24px; display: flex; align-items: center; padding-left: 34px; font-family: "Liberation Sans", sans-serif; font-size: 11px; }
.browser .panelhead + .row { margin-top: 3px; }
.root { padding-left: 16px; }
.strip { height: 20px; background: #f2f2f2; display: flex; align-items: center; margin-left: 6px; padding: 0 10px 0 2px; white-space: nowrap; }
.root .strip { padding-right: 8px; }
.eye { width: 18px; }
.rootname { width: 98px; height: 16px; margin-left: 5px; background: #999; color: #fff; display: flex; align-items: center; padding-left: 2px; }
.rootname b { margin-left: 13px; letter-spacing: .2px; }
.radio { margin-left: 3px; }
.settings .strip { padding-left: 1px; }
.settings .name { margin-left: 10px; letter-spacing: -.17px; }
.views .strip { padding-right: 8px; }
.views .name { margin-left: 13px; }
.folder-row .glyph { margin-left: 7px; }
.folder-row .name { margin-left: 13px; }
.leaf .strip { margin-left: 24px; }
.leaf .glyph { margin-left: 7px; }
.leaf .name { margin-left: 13px; }
.navbar { position: absolute; left: 642px; top: 816px; background: #f2f2f2; }
.timeline { height: 42px; flex: none; background: #f2f2f2; border-top: 1px solid #ccc; display: flex; }
.playback { width: 141px; }
.history { display: flex; height: 41px; position: relative; padding-left: .5px; }
.history::after { content: ""; position: absolute; left: 13px; right: 12px; bottom: 0; height: 2px; background: #c9c9c9; }
.feature { width: 24.050px; display: flex; flex-direction: column; align-items: center; padding-top: 15px; }
.feature i { width: 2px; height: 6px; margin-top: 2px; background: #c9c9c9; }
.marker { margin: 7px 0 0 -8px; }
</style>
